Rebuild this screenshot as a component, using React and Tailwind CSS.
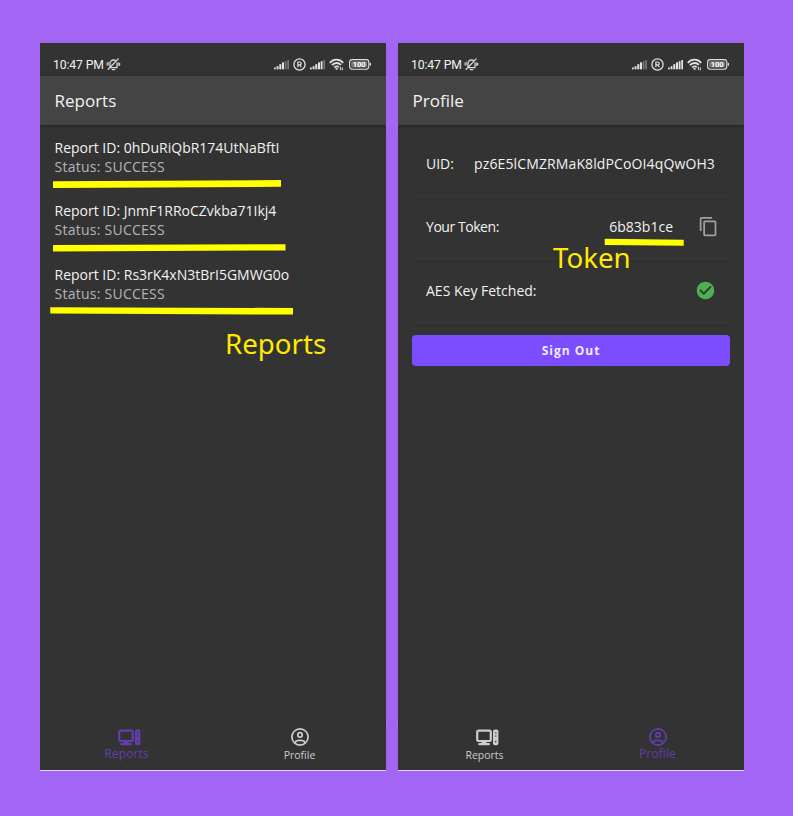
import React from "react";
import { MdContentCopy, MdCheckCircle } from "react-icons/md";

function MutedBell() {
  return (
    <svg width="15" height="13" viewBox="0 0 15 13" fill="none" stroke="#d6d6d6" strokeWidth="1.3" strokeLinecap="round">
      <path d="M4 9.6V6C4 3.6 5.3 2 7.4 2c1 0 1.9.4 2.5 1M11 5v4.6H4.8M6.2 11.6h2.6M12.2.9 2.2 11.2M1.2 5v2M13.6 5.5v1.6" />
      <path d="M2.8 4v3M12.4 4.6v3" strokeWidth=".8" />
    </svg>
  );
}

function Signal({ fourth = "#e4e4e4", last }) {
  return (
    <svg width="15" height="11" viewBox="0 0 15 11" fill="#e4e4e4">
      <rect x="0" y="8.5" width="1.8" height="1.8" />
      <rect x="2.6" y="7.2" width="1.9" height="3.1" />
      <rect x="5.3" y="5.2" width="2" height="5.1" />
      <rect x="8" y="3.4" width="2" height="6.9" />
      <rect x="10.7" y="2.2" width="1.8" height="8.1" fill={fourth} />
      <rect x="13.3" y="1" width="1.7" height="9.3" fill={last} />
    </svg>
  );
}

function StatusIcons({ full }) {
  return (
    <div className="flex items-center">
      <Signal fourth="#777777" last="#777777" />
      <svg className="ml-[4px]" width="13" height="13" viewBox="0 0 13 13" fill="none" stroke="#e0e0e0" strokeWidth="1.3">
        <circle cx="6.5" cy="6.5" r="5.6" />
        <path d="M4.9 9.2V4h1.9a1.4 1.4 0 0 1 0 2.9H4.9M6.7 6.9l1.6 2.3" strokeWidth="1.2" />
      </svg>
      <div className="ml-[4px]">
        <Signal last={full ? "#e4e4e4" : "#777777"} />
      </div>
      <svg className="ml-[4px]" width="16" height="13" viewBox="0 0 16 13" fill="none" stroke="#e0e0e0" strokeWidth="1.8">
        <path d="M.8 4.8C4.5.6 10.5.6 14.2 4.8M3 7.2c2.5-2.9 6.5-2.9 9-.3M5.200 9.4c1.3-1.4 3.3-1.5 4.6-.2" />
        <path d="M6.4 10.5h2.4l-1.200 1.4z" fill="#e0e0e0" strokeWidth=".6" />
        <path d="M11.4 8.8v3.2M13.3 9.3v3" strokeWidth="1" />
      </svg>
      <svg className="ml-[4px]" width="23" height="11" viewBox="0 0 23 11">
        <rect x=".6" y=".6" width="19.2" height="9.6" rx="2.6" fill="none" stroke="#e0e0e0" strokeWidth="1.1" />
        <rect x="2.2" y="2.2" width="16" height="6.4" rx="1.2" fill="#777" />
        <rect x="20.6" y="3.8" width="1.4" height="3" rx=".6" fill="#e0e0e0" />
        <text x="10.2" y="8.2" textAnchor="middle" fill="#fff" fontSize="7.6" fontWeight="700" fontFamily="Roboto, sans-serif">100</text>
      </svg>
    </div>
  );
}

function ComputerIcon() {
  return (
    <svg width="23" height="17" viewBox="0 0 23 17" fill="none" stroke="currentColor" strokeWidth="2.2">
      <rect x="1.2" y="1.6" width="13.6" height="10.4" rx="1.6" />
      <path d="M8 12v3" strokeWidth="5" />
      <path d="M3.3 15.2h9.6" strokeLinecap="round" />
      <rect x="17" y=".6" width="5.4" height="15.7" rx="1.8" fill="currentColor" stroke="none" />
      <path d="M18.8 4h1.8M18.8 7h1.8" stroke="#333" strokeWidth=".9" />
      <circle cx="19.7" cy="12.6" r=".8" fill="#333" stroke="none" />
    </svg>
  );
}

function ProfileIcon() {
  return (
    <svg width="18" height="18" viewBox="0 0 18 18" fill="none" stroke="currentColor" strokeWidth="1.7">
      <circle cx="9" cy="9" r="8.1" />
      <circle cx="9" cy="6.9" r="2.2" />
      <path d="M4.3 15.2v-.6c0-1.3 2-2.3 4.7-2.3s4.7 1 4.7 2.3v.6" />
    </svg>
  );
}

function Tab({ icon, label, active, className }) {
  return (
    <div className={`flex w-1/2 flex-col items-center ${active ? "text-[#653cae]" : "text-[#cccccc]"}`}>
      <div className={`flex h-[18px] items-center ${className}`}>{icon}</div>
      {active ? (
        <span className="text-[12px] leading-[16px] tracking-[0.1px]">{label}</span>
      ) : (
        <span className="mt-px text-[10.5px] leading-[16px]">{label}</span>
      )}
    </div>
  );
}

function Phone({ title, active, full, children }) {
  return (
    <section className="flex h-[728px] shrink-0 flex-col overflow-hidden border-b border-[#e0d7ee] bg-[#333333]">
      <div className="flex h-[33px] shrink-0 items-center justify-between pt-[10px] pr-[14px] pl-[13px]">
        <div className="flex items-center gap-[2px]">
          <span className="font-['Roboto'] text-[12.2px] leading-4 tracking-[-0.1px] text-[#f2f2f2]">10:47 PM</span>
          <MutedBell />
        </div>
        <StatusIcons full={full} />
      </div>
      <header className="flex h-[49px] shrink-0 items-center bg-[#444444] pl-[14.5px] shadow-[0_1px_3px_#222]">
        <h1 className="text-[17px] text-[#f2f2f2]">{title}</h1>
      </header>
      <main className="flex-1">{children}</main>
      <nav className="flex h-[44px] shrink-0 pt-[2px] shadow-[0_-1px_1px_#303030]">
        <Tab icon={<ComputerIcon />} label="Reports" active={active === 0} className="ml-[5px]" />
        <Tab icon={<ProfileIcon />} label="Profile" active={active === 1} className="" />
      </nav>
    </section>
  );
}

function Report({ id }) {
  return (
    <article className="h-[63.3px] pl-[14.5px] text-[14px] whitespace-nowrap">
      <p className="leading-[20px] text-[#f2f2f2]">Report ID: {id}</p>
      <p className="-mt-px leading-[19px] tracking-[0.25px] text-[#b5b5b5]">Status: SUCCESS</p>
    </article>
  );
}

function Marks() {
  return (
    <svg className="absolute inset-0" width="793" height="816" fill="#ffff00">
      <path d="M53 181.2 281 180v6.8L53 188z" />
      <path d="M53 245l232.5-.8v6.2L53 251.5z" />
      <path d="M50.3 307.2 293 308v6.6l-242.7-1.2z" />
      <path d="m604.7 238.8 79 1v6l-79-.7z" />
    </svg>
  );
}

export default function App() {
  return (
    <div className="relative flex h-[816px] w-[793px] gap-[12px] overflow-hidden bg-[#a366f4] pt-[43px] pl-[40px] font-['Open_Sans',sans-serif]">
      <div className="w-[346px]">
        <Phone title="Reports" active={0}>
          <div className="pt-[13px]">
            <Report id="0hDuRiQbR174UtNaBftI" />
            <Report id="JnmF1RRoCZvkba71Ikj4" />
            <Report id="Rs3rK4xN3tBrI5GMWG0o" />
          </div>
        </Phone>
      </div>
      <div className="w-[346px]">
        <Phone title="Profile" active={1} full>
          <div className="px-[14px] pt-[7px] text-[14px] text-[#f2f2f2]">
            <div className="flex h-[63.5px] items-center justify-between border-b border-[#3a3a3a] pr-[15px] pl-[14px]">
              <span>UID:</span>
              <span className="tracking-[0.12px]">pz6E5lCMZRMaK8ldPCoOI4qQwOH3</span>
            </div>
            <div className="flex h-[63.5px] items-center border-b border-[#3a3a3a] pr-[11px] pl-[14px]">
              <span className="tracking-[-0.45px]">Your Token:</span>
              <span className="ml-auto">6b83b1ce</span>
              <MdContentCopy className="ml-[25px] text-[21px] text-[#a0a0a0]" />
            </div>
            <div className="flex h-[63.5px] items-center justify-between border-b border-[#3a3a3a] px-[14px]">
              <span>AES Key Fetched:</span>
              <MdCheckCircle className="text-[21px] text-[#4caf50]" />
            </div>
            <button className="mt-[12px] flex h-[31.5px] w-full items-center justify-center rounded-[4px] bg-[#7c4dff] pt-px text-[12px] font-bold tracking-[1px] text-[#f1ebff]">
              Sign Out
            </button>
          </div>
        </Phone>
      </div>
      <Marks />
      <span className="absolute top-[324px] left-[225px] font-['Noto_Sans',sans-serif] text-[27.7px] leading-[38px] text-[#ffeb00]">Reports</span>
      <span className="absolute top-[238px] left-[553px] font-['Noto_Sans',sans-serif] text-[27.7px] leading-[38px] text-[#ffeb00]">Token</span>
    </div>
  );
}
